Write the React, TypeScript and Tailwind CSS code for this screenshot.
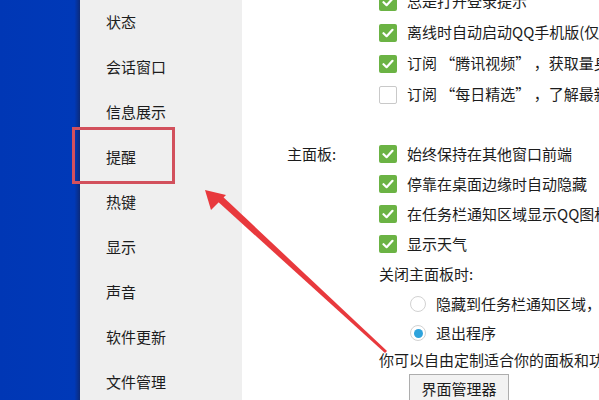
import React from 'react';

const font = { fontFamily: '"Noto Sans CJK SC", "Noto Sans", sans-serif' };

const navItems = ['状态', '会话窗口', '信息展示', '提醒', '热键', '显示', '声音', '软件更新', '文件管理'];

function CheckBox({ checked }: { checked: boolean }) {
  if (!checked) {
    return <div className="h-[18px] w-[18px] shrink-0 rounded-[2px] border border-[#c9c9c9] bg-white" />;
  }
  return (
    <div className="flex h-[18px] w-[18px] shrink-0 items-center justify-center rounded-[2px] bg-[#6bb344]">
      <svg width="12" height="10" viewBox="0 0 12 10" fill="none">
        <path d="M1.5 5.2 L4.6 8.2 L10.5 1.8" stroke="white" strokeWidth="2.2" strokeLinecap="round" strokeLinejoin="round" />
      </svg>
    </div>
  );
}

function Radio({ checked }: { checked: boolean }) {
  return (
    <div className="flex h-[16px] w-[16px] shrink-0 items-center justify-center rounded-full border border-[#d2d2d2] bg-white">
      {checked && <div className="h-[9px] w-[9px] rounded-full bg-[#2ea3dc]" />}
    </div>
  );
}

function CheckRow({ text, checked = true, h = 'h-[30px]' }: { text: string; checked?: boolean; h?: string }) {
  return (
    <div className={`flex ${h} items-center gap-[10px] whitespace-nowrap`}>
      <CheckBox checked={checked} />
      <span>{text}</span>
    </div>
  );
}

export default function App() {
  return (
    <div className="relative flex h-[400px] w-[599px] overflow-hidden bg-white text-[15px] text-[#1c1c1c]" style={font}>
      {/* desktop behind */}
      <div className="w-[80px] shrink-0 bg-gradient-to-r from-[#0037b5] via-[#0039b8] via-[93%] to-[#0b2a7a]" />

      {/* sidebar */}
      <div className="w-[162px] shrink-0 bg-[#efefef]">
        {navItems.map((item) => (
          <div key={item} className="flex h-[45px] items-center pl-[26px]">
            {item}
          </div>
        ))}
      </div>

      {/* settings */}
      <div className="min-w-0 flex-1 overflow-hidden">
        <div className="-mt-[14px] pl-[137px]">
          <CheckRow text="总是打开登录提示" h="h-[31px]" />
          <CheckRow text="离线时自动启动QQ手机版(仅在电脑离线时)" h="h-[31px]" />
          <CheckRow text="订阅 “腾讯视频” ，获取量身推荐" h="h-[31px]" />
          <CheckRow text="订阅 “每日精选” ，了解最新资讯" checked={false} h="h-[31px]" />
        </div>

        <div className="mt-[29px] grid grid-cols-[92px_1fr] pl-[45px]">
          <div className="flex h-[30px] items-center">主面板:</div>
          <div>
            <CheckRow text="始终保持在其他窗口前端" />
            <CheckRow text="停靠在桌面边缘时自动隐藏" />
            <CheckRow text="在任务栏通知区域显示QQ图标" />
            <CheckRow text="显示天气" />
            <div className="flex h-[30px] items-center whitespace-nowrap">关闭主面板时:</div>
            <div className="flex h-[30px] items-center gap-[10px] whitespace-nowrap pl-[31px]">
              <Radio checked={false} />
              <span>隐藏到任务栏通知区域，不退出程序</span>
            </div>
            <div className="flex h-[28px] items-center gap-[10px] whitespace-nowrap pl-[31px]">
              <Radio checked />
              <span>退出程序</span>
            </div>
            <div className="flex h-[26px] items-center whitespace-nowrap">你可以自由定制适合你的面板和功能</div>
            <div className="mt-[1px] pl-[30px]">
              <button className="flex h-[30px] w-[100px] items-center justify-center border border-[#adadad] bg-[#f2f2f2] text-[15px] text-[#1c1c1c]">
                界面管理器
              </button>
            </div>
          </div>
        </div>
      </div>

      {/* annotation box */}
      <div className="absolute left-[72px] top-[127px] h-[57px] w-[103px] border-[3px] border-[#d2505c]" />

      {/* annotation arrow */}
      <svg className="pointer-events-none absolute left-0 top-0" width="599" height="400" viewBox="0 0 599 400">
        <polygon points="215,199 220,194 387,351 385,353" fill="#e8393d" />
        <polygon points="205,190 226,195 211,210" fill="#e8393d" />
      </svg>
    </div>
  );
}
